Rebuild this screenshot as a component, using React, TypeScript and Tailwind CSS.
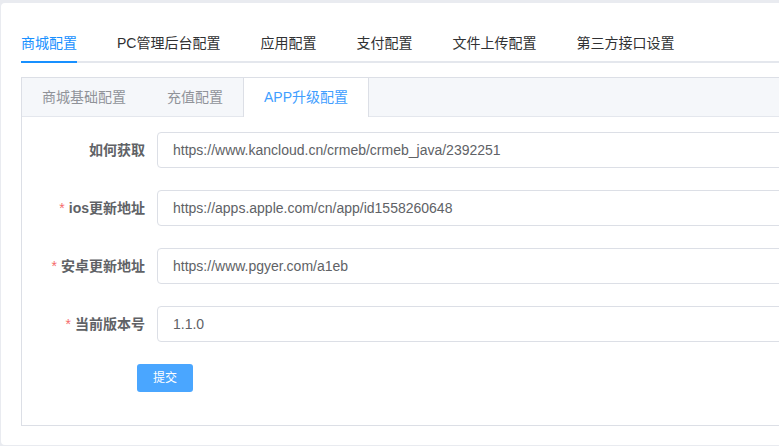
import React from "react";

const font = { fontFamily: '"Liberation Sans", "Noto Sans CJK SC", sans-serif' };

const topTabs = ["商城配置", "PC管理后台配置", "应用配置", "支付配置", "文件上传配置", "第三方接口设置"];
const fields = [
  { label: "如何获取", required: false, value: "https://www.kancloud.cn/crmeb/crmeb_java/2392251" },
  { label: "ios更新地址", required: true, value: "https://apps.apple.com/cn/app/id1558260648" },
  { label: "安卓更新地址", required: true, value: "https://www.pgyer.com/a1eb" },
  { label: "当前版本号", required: true, value: "1.1.0" },
];

export default function App() {
  return (
    <div className="w-[779px] h-[446px] overflow-hidden bg-[#e9ebf0] pt-[3px] pl-[1px]" style={font}>
      <div className="w-[900px] h-[442px] bg-white rounded-[4px] pt-[20px] pl-[20px]">
        {/* top tabs */}
        <div className="relative h-[40px] flex">
          <div className="absolute left-0 right-0 bottom-0 h-[2px] bg-[#e4e7ed]" />
          {topTabs.map((t, i) => (
            <div
              key={t}
              className={`relative h-[40px] leading-[40px] text-[14px] ${i === 0 ? "pr-[20px] text-[#1890ff]" : "px-[20px] text-[#303133]"}`}
            >
              {t}
              {i === 0 && <div className="absolute left-0 right-[20px] bottom-0 h-[2px] bg-[#1890ff]" />}
            </div>
          ))}
        </div>
        {/* inner card */}
        <div className="mt-[14px] border border-[#dcdfe6]">
          <div className="h-[39px] bg-[#f5f7fa] border-b border-[#e4e7ed] flex">
            <div className="h-[39px] leading-[39px] px-[20px] text-[14px] text-[#909399]">商城基础配置</div>
            <div className="h-[39px] leading-[39px] pl-[21px] pr-[20px] text-[14px] text-[#909399]">充值配置</div>
            <div className="h-[39px] leading-[39px] px-[20px] text-[14px] text-[#409eff] bg-white border-l border-r border-[#dcdfe6] -mb-px">
              APP升级配置
            </div>
          </div>
          <div className="pt-[15px] pb-[33px]">
            {fields.map((f) => (
              <div key={f.label} className="flex items-center mb-[22px]">
                <div className="w-[135px] pr-[12px] text-right text-[14px] font-bold text-[#606266]">
                  {f.required && <span className="text-[#f56c6c] mr-[4px] font-normal">*</span>}
                  {f.label}
                </div>
                <div className="w-[700px] h-[36px] border border-[#dcdfe6] rounded-[4px] px-[15px] flex items-center text-[14px] text-[#606266]">
                  {f.value}
                </div>
              </div>
            ))}
            <div className="pl-[115px]">
              <button className="w-[56px] h-[28px] rounded-[3px] bg-[#4aa6ff] text-white text-[12px] leading-[28px]">
                提交
              </button>
            </div>
          </div>
        </div>
      </div>
    </div>
  );
}
